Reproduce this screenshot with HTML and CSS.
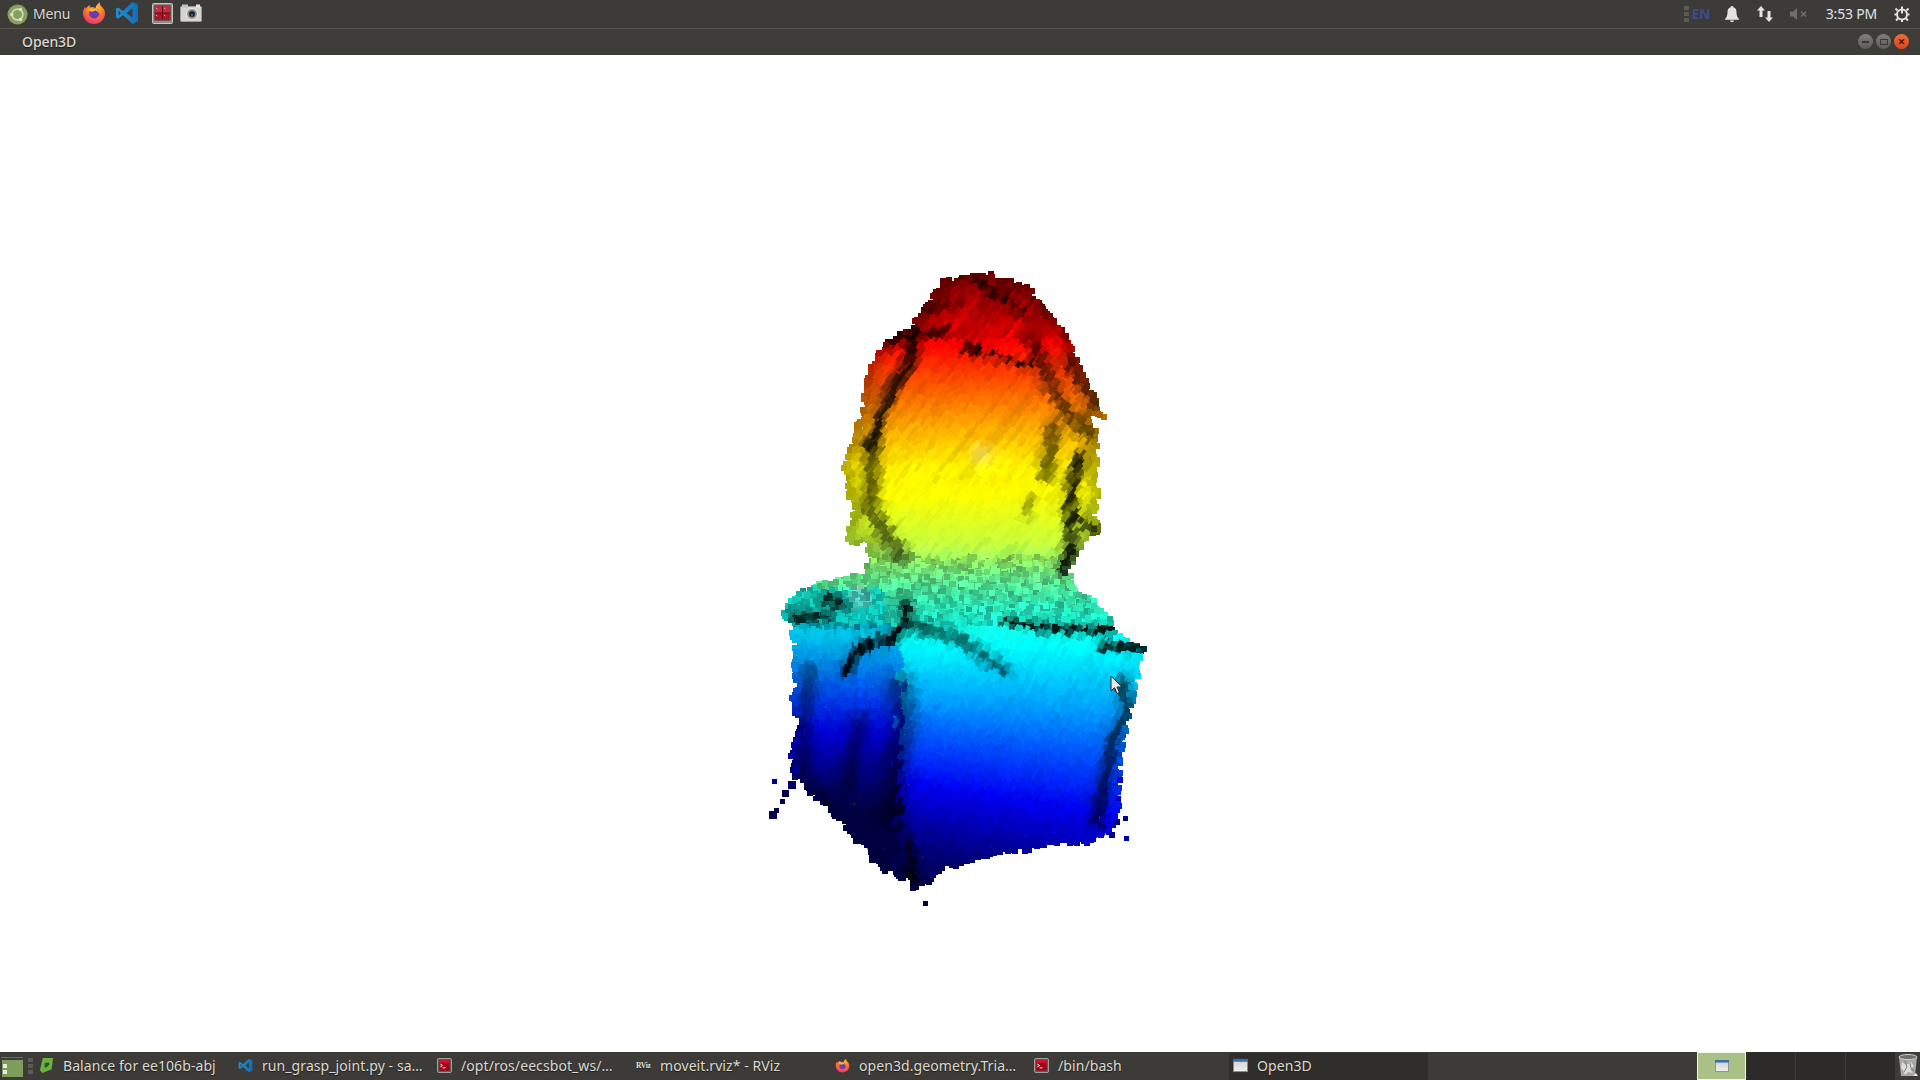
FILE: index.html
```
<!DOCTYPE html>
<html lang="en">
<head>
<meta charset="utf-8">
<title>Open3D</title>
<link rel="stylesheet" href="styles.css">
</head>
<body>
<svg class="defs" width="0" height="0" aria-hidden="true">
  <defs>
    <radialGradient id="ffBody" cx="0.55" cy="0.25" r="0.85">
      <stop offset="0" stop-color="#ffd23a"/><stop offset="0.45" stop-color="#ff7a2a"/><stop offset="1" stop-color="#e8237a"/>
    </radialGradient>
    <linearGradient id="vsBlue" x1="0" y1="0" x2="1" y2="0">
      <stop offset="0" stop-color="#1f8fd8"/><stop offset="1" stop-color="#0f6fb8"/>
    </linearGradient>
    <linearGradient id="winFace" x1="0" y1="0" x2="0" y2="1">
      <stop offset="0" stop-color="#cfd2cf"/><stop offset="1" stop-color="#f0f0ee"/>
    </linearGradient>
    <symbol id="i-firefox" viewBox="0 0 24 24">
      <path fill="url(#ffBody)" d="M12 23C5.800 23 1 18.300 1 12.200c0-2.400.7-4.600 2-6.300l1 1.900C5 5.600 6.800 4.500 8.500 4.300 7.800 5 7.400 5.800 7.500 6.500 9.500 5.900 12 6.200 13.500 7.300 13.800 4.800 15.800 2.300 18 1c-.4 1.800.2 3.200 1.500 4.500C21.800 7.600 23 9.800 23 12.500 23 18.300 18.200 23 12 23z"/>
      <circle cx="12.200" cy="12.400" r="5.200" fill="#6a3bb8"/>
      <path fill="#ffb52e" d="M6 9.500c2-2.400 6.500-3 9-1.200 1.600 1.200 2.500 3 2.200 5-.5-2-2-3.300-4-3.700-1.200.2-2 .6-2.600 1.200L6 9.500z"/>
    </symbol>
    <symbol id="i-vscode" viewBox="0 0 24 24">
      <path fill="url(#vsBlue)" d="M17.500 1 23 3.700v16.600L17.500 23 8 13.900 3.300 17.500 1 16.300V7.700l2.300-1.200L8 10.100 17.500 1zm0 6.200L11.600 12l5.900 4.800V7.200zM3.500 9.500v5L6 12 3.500 9.500z"/>
    </symbol>
    <symbol id="i-term" viewBox="0 0 16 16">
      <rect x="0.500" y="0.500" width="15" height="15" rx="1.500" fill="#5a5a56" stroke="#a8a8a3"/>
      <rect x="2.500" y="2.500" width="11" height="11" fill="#a50016"/>
      <rect x="2.500" y="2.500" width="11" height="2.500" fill="#e01030"/>
      <path d="M3.500 6.500 6 8 3.500 9.500M6 10.500h3" fill="none" stroke="#fff" stroke-width="1"/>
    </symbol>
    <symbol id="i-window" viewBox="0 0 16 14">
      <rect x="0.500" y="0.500" width="15" height="13" fill="url(#winFace)" stroke="#8a8a88"/>
      <rect x="0" y="0" width="16" height="3" fill="#3a6cb4"/>
    </symbol>
  </defs>
</svg>

<header class="panel">
  <div class="menu">
    <svg class="menu-logo" viewBox="0 0 24 24" width="21" height="21" aria-hidden="true">
      <circle cx="12" cy="12" r="11.500" fill="#87a05e"/>
      <circle cx="12" cy="12" r="6.200" fill="none" stroke="#cdd6b8" stroke-width="2"/>
      <circle cx="5.400" cy="12" r="1.900" fill="#dfe5d0"/>
      <circle cx="15.400" cy="6.300" r="1.900" fill="#dfe5d0"/>
      <circle cx="15.400" cy="17.700" r="1.900" fill="#dfe5d0"/>
    </svg>
    <span class="menu-label">Menu</span>
  </div>
  <div class="launchers">
    <svg class="launch launch-ff" aria-hidden="true"><use href="#i-firefox"/></svg>
    <svg class="launch launch-vs" aria-hidden="true"><use href="#i-vscode"/></svg>
    <svg class="launch launch-term" viewBox="0 0 21 21" aria-hidden="true">
      <rect x="0.500" y="0.500" width="20" height="20" rx="1" fill="#8c8c88" stroke="#c4c4c0"/>
      <rect x="2.500" y="2.500" width="16" height="15" fill="#5f1018"/>
      <rect x="3" y="3" width="7" height="6.500" fill="#c8283c"/>
      <rect x="11" y="3" width="7" height="6.500" fill="#c8283c"/>
      <rect x="3" y="10.500" width="7" height="6.500" fill="#a51828"/>
      <rect x="11" y="10.500" width="7" height="6.500" fill="#a51828"/>
      <path d="M4 5l1.500 1M12 5l1.500 1M4 12l1.500 1M12 12l1.500 1" stroke="#f2c8cc" stroke-width="0.800"/>
    </svg>
    <svg class="launch launch-cam" viewBox="0 0 22 18" aria-hidden="true">
      <rect x="0.500" y="2.500" width="21" height="15" rx="1" fill="#d4d4d0" stroke="#9a9a96"/>
      <rect x="2" y="0.500" width="6" height="3" fill="#c0c0bc"/>
      <rect x="16" y="0.500" width="4" height="3" fill="#e6e6e2"/>
      <circle cx="12" cy="10" r="5.500" fill="#8f8f8b" stroke="#f0f0ec"/>
      <circle cx="12" cy="10" r="3" fill="#20242e"/>
      <circle cx="12" cy="11" r="1.200" fill="#2f5fb0"/>
    </svg>
  </div>
  <div class="tray">
    <span class="grip"></span>
    <span class="lang">EN</span>
    <svg class="tray-icon tray-bell" viewBox="0 0 14 16" aria-hidden="true">
      <path fill="#e6e3dc" d="M7 0c1 0 1.400.6 1.400 1.300C10.600 2 11.500 3.800 11.500 6.500c0 3 .8 4.800 2.500 6.500v.8H0V13c1.700-1.700 2.500-3.500 2.500-6.500 0-2.700.9-4.500 3.100-5.200C5.600.6 6 0 7 0zM5 14.500h4C9 15.500 8 16 7 16s-2-.5-2-1.500z"/>
    </svg>
    <svg class="tray-icon tray-net" viewBox="0 0 16 16" aria-hidden="true">
      <path fill="#e6e3dc" d="M4 0 8 4.500H5.500V11h-3V4.500H0zM12 16 8 11.500h2.500V5h3v6.500H16z"/>
    </svg>
    <svg class="tray-icon tray-mute" viewBox="0 0 18 12" aria-hidden="true">
      <path fill="#6f6e69" d="M0 3.500h3.500L7 0v12L3.500 8.500H0z"/>
      <path d="M11 3.500l5 5M16 3.500l-5 5" stroke="#6f6e69" stroke-width="1.600" fill="none"/>
    </svg>
    <span class="clock">3:53 PM</span>
    <svg class="tray-icon tray-gear" viewBox="0 0 16 16" aria-hidden="true">
      <circle cx="8" cy="8.500" r="5" fill="none" stroke="#e6e3dc" stroke-width="2"/>
      <path d="M8 0.500v7M1.500 2.500l2 2M14.500 2.500l-2 2M0.500 8.500h2M13.500 8.500h2M2 14.500l2-2M14 14.500l-2-2M8 14v2" stroke="#e6e3dc" stroke-width="2" fill="none"/>
    </svg>
  </div>
</header>

<div class="titlebar">
  <span class="title">Open3D</span>
  <div class="win-buttons">
    <span class="wb wb-min"><i class="glyph-min"></i></span>
    <span class="wb wb-max"><i class="glyph-max"></i></span>
    <span class="wb wb-close">×</span>
  </div>
</div>

<main class="viewport">
  <canvas id="cloud" width="1920" height="997"></canvas>
  <svg class="cursor" viewBox="0 0 13 20" width="13" height="20" aria-hidden="true">
    <path d="M1 1v15l3.500-3.300L7 18.500l2.500-1-2.500-5.500h5z" fill="#e8e8e8" stroke="#222" stroke-width="1"/>
  </svg>
</main>

<footer class="taskbar">
  <div class="show-desktop">
    <svg viewBox="0 0 22 20" width="22" height="20" aria-hidden="true">
      <rect x="0" y="0" width="22" height="1" fill="#6c6b66"/>
      <rect x="1" y="3" width="21" height="17" fill="#7e9c5b"/>
      <rect x="2" y="7" width="4" height="4" fill="#e8eadf"/>
      <rect x="2" y="13" width="4" height="4" fill="#e8eadf"/>
    </svg>
  </div>
  <span class="grip grip-task"></span>
  <div class="tasks">
    <div class="task">
      <svg class="task-icon" viewBox="0 0 14 16" aria-hidden="true"><path fill="#6fb13f" d="M3 0h11l-1.500 12-10 4L0 13z"/><path fill="#1f5a2c" d="M5 5h5v2L7 10H5z"/></svg>
      <span class="task-label">Balance for ee106b-abj</span>
    </div>
    <div class="task">
      <svg class="task-icon" aria-hidden="true"><use href="#i-vscode"/></svg>
      <span class="task-label">run_grasp_joint.py - sa…</span>
    </div>
    <div class="task">
      <svg class="task-icon" aria-hidden="true"><use href="#i-term"/></svg>
      <span class="task-label">/opt/ros/eecsbot_ws/…</span>
    </div>
    <div class="task">
      <span class="rviz-logo">RViz</span>
      <span class="task-label">moveit.rviz* - RViz</span>
    </div>
    <div class="task">
      <svg class="task-icon" aria-hidden="true"><use href="#i-firefox"/></svg>
      <span class="task-label">open3d.geometry.Tria…</span>
    </div>
    <div class="task">
      <svg class="task-icon" aria-hidden="true"><use href="#i-term"/></svg>
      <span class="task-label">/bin/bash</span>
    </div>
    <div class="task task-active">
      <svg class="task-icon" aria-hidden="true"><use href="#i-window"/></svg>
      <span class="task-label">Open3D</span>
    </div>
  </div>
  <div class="workspaces">
    <div class="ws ws-current"><svg class="ws-win" aria-hidden="true"><use href="#i-window"/></svg></div>
    <div class="ws"></div>
    <div class="ws"></div>
    <div class="ws"></div>
  </div>
  <div class="trash">
    <svg viewBox="0 0 20 24" width="20" height="24" aria-hidden="true">
      <path d="M1 3h18l-2 19H3z" fill="#a8a8a4"/>
      <ellipse cx="10" cy="3" rx="9" ry="2.500" fill="#6f6f6b" stroke="#cfcfca"/>
      <path d="M4 8l4 3 5-3 3 4-4 3 3 4-5-1-3 3-2-5-2-2z" fill="#dcdcd8"/>
      <path d="M7 7l2 6-3 5M12 9l1 5 3 3" stroke="#7f7f7b" fill="none"/>
      <path d="M15 22l3-3 2 3z" fill="#eee"/>
    </svg>
  </div>
</footer>
<script src="script.js"></script>
</body>
</html>
```
FILE: styles.css
```
* { box-sizing: border-box; }
html, body { margin: 0; height: 100%; }
body {
  display: flex;
  flex-direction: column;
  height: 100vh;
  overflow: hidden;
  background: #fff;
  font-family: "Noto Sans", "Open Sans", sans-serif;
  font-size: 14px;
  color: #dcd9d2;
}
.defs { position: absolute; }

.panel {
  display: flex;
  align-items: center;
  height: 29px;
  flex: none;
  background: #3d3b37;
  border-bottom: 1px solid #55534e;
}
.menu { display: flex; align-items: center; gap: 5px; margin-left: 7px; }
.menu-logo { display: block; }
.menu-label { letter-spacing: -0.2px; text-shadow: 0 1px 1px #1d1c1a; padding-bottom: 1px; }
.launchers { display: flex; align-items: center; margin-left: 12px; padding-bottom: 2px; }
.launch { display: block; }
.launch-ff { width: 24px; height: 24px; }
.launch-vs { width: 24px; height: 24px; margin-left: 9px; }
.launch-term { width: 21px; height: 21px; margin-left: 13px; }
.launch-cam { width: 22px; height: 18px; margin-left: 7px; }
.tray { display: flex; align-items: center; margin-left: auto; padding-bottom: 1px; }
.grip {
  display: block;
  width: 5px;
  height: 16px;
  background: repeating-linear-gradient(#5c5a55 0 4px, transparent 4px 6px);
}
.lang { margin-left: 3px; color: #3b4c96; font-weight: 700; font-size: 13.500px; width: 24px; }
.tray-icon { display: block; }
.tray-bell { width: 14px; height: 16px; margin-left: 9px; }
.tray-net { width: 16px; height: 16px; margin-left: 18px; }
.tray-mute { width: 18px; height: 12px; margin-left: 17px; }
.clock { margin-left: 18px; letter-spacing: -0.2px; color: #dfe3ea; }
.tray-gear { width: 16px; height: 16px; margin-left: 17px; margin-right: 10px; }

.titlebar {
  display: flex;
  align-items: center;
  height: 26px;
  flex: none;
  padding-left: 22px;
  padding-right: 11px;
  padding-bottom: 1px;
  background: #3d3c38;
}
.title { font-weight: 500; color: #dcd9d2; text-shadow: 0 1px 1px #1d1c1a; letter-spacing: -0.1px; }
.win-buttons { display: flex; gap: 3px; margin-left: auto; }
.wb {
  display: flex;
  align-items: center;
  justify-content: center;
  width: 15px;
  height: 15px;
  border-radius: 50%;
  background: linear-gradient(#7f7e79, #5d5c58);
}
.glyph-min { display: block; width: 7px; height: 2px; background: #3a3936; }
.glyph-max { display: block; width: 8px; height: 6px; border: 1px solid #3a3936; }
.wb-close {
  background: linear-gradient(#f0693a, #d9481c);
  color: #4a1c0c;
  font-size: 13px;
  line-height: 15px;
  font-weight: 700;
}

.viewport { position: relative; flex: 1; min-height: 0; background: #fff; }
#cloud { display: block; }
.cursor { position: absolute; left: 1110px; top: 620px; }

.taskbar {
  display: flex;
  align-items: stretch;
  height: 28px;
  flex: none;
  background: #3c3b37;
}
.show-desktop { display: flex; align-items: center; width: 24px; padding-left: 1px; padding-top: 2px; }
.grip-task { align-self: center; margin-left: 4px; height: 16px; }
.tasks { display: flex; margin-left: 2px; }
.task {
  display: flex;
  align-items: center;
  gap: 9px;
  width: 199px;
  padding-left: 4px;
  padding-bottom: 2px;
  white-space: nowrap;
  overflow: hidden;
  text-shadow: 0 1px 1px #1d1c1a;
}
.task-active { background: #2f2e2b; margin-top: 1px; padding-bottom: 3px; padding-left: 4px; }
.task-icon { display: block; width: 15px; height: 15px; flex: none; }
.task-label { letter-spacing: 0.08px; }
.rviz-logo { width: 15px; font-family: "Liberation Serif", serif; font-size: 7.500px; color: #e6e3dc; flex: none; letter-spacing: -0.3px; font-weight: 700; }
.workspaces { display: flex; margin-left: auto; margin-right: 0; }
.ws { width: 50px; background: #2c2b29; border-right: 1px solid #3c3b37; }
.ws-current {
  display: flex;
  align-items: center;
  justify-content: center;
  width: 49px;
  background: #a9c087;
  border: 1px solid #f3f4ee;
  border-bottom-width: 1px;
}
.ws-win { display: block; width: 14px; height: 12px; }
.trash { display: flex; align-items: center; justify-content: center; width: 24px; background: #3c3b37; }
```
FILE: script.js
```
(function () {
  var canvas = document.getElementById('cloud');
  var ctx = canvas.getContext('2d');
  var TOP = 55;

  function h(p) { return p.map(function (q) { return [760 + q[0] / 3, 260 + q[1] / 3]; }); }
  function b(p) { return p.map(function (q) { return [760 + q[0] / 3, 580 + q[1] / 3]; }); }

  var outline = h([[625,45],[720,50],[800,80],[860,150],[910,210],[960,320],[1010,430],[1025,470],[990,470],[1015,560],[1000,640],[1018,700],[1000,760],[1020,810],[970,850],[960,880],[925,940]])
    .concat(b([[940,20],[990,60],[1040,100],[1060,150],[1100,185],[1160,205],[1140,230],[1130,310],[1100,450],[1075,560],[1085,600],[1070,650],[1075,700],[1050,770],[1000,785],[880,790],[700,825],[560,860],[520,890],[470,925],[440,895],[400,885],[370,870],[310,810],[250,730],[190,670],[130,620],[90,570],[100,500],[120,430],[95,370],[105,270],[100,200],[100,130],[75,100],[95,55],[160,10]]))
    .concat(h([[200,965],[320,940],[335,900],[320,850],[260,845],[275,800],[280,750],[265,680],[250,610],[270,580],[280,520],[300,470],[320,400],[325,330],[350,280],[380,250],[460,190],[520,110],[555,65]]));
  var closed = outline.concat([outline[0]]);

  // [polyline, width, darkness]
  var creases = [
    [h([[460,240],[450,310],[400,380],[360,470],[335,550]]), 7, 0.85],
    [h([[335,550],[335,640],[330,740],[380,830],[420,890]]), 9, 0.6],
    [h([[620,265],[700,285],[820,320]]), 4, 0.85],
    [h([[380,250],[460,220],[550,220]]), 6, 0.7],
    [h([[480,150],[600,130]]), 5, 0.45],
    [h([[650,70],[720,105],[790,160]]), 5, 0.65],
    [h([[820,250],[880,390],[920,450],[980,520]]), 8, 0.6],
    [h([[880,500],[860,640]]), 9, 0.55],
    [h([[960,590],[935,690],[930,780],[930,880],[910,930]]), 7, 0.85],
    [h([[1000,810],[950,770]]), 5, 0.7],
    [h([[810,720],[800,760]]), 5, 0.35],
    [h([[1010,440],[970,380],[930,300]]), 7, 0.55],
    [b([[440,70],[440,130],[400,170],[290,210],[260,270]]), 6, 0.92],
    [b([[110,110],[200,110]]), 6, 0.8],
    [b([[200,50],[240,75]]), 7, 0.75],
    [b([[740,125],[900,150],[1050,150]]), 4.500, 0.9],
    [b([[1030,195],[1150,205]]), 5, 0.88],
    [b([[470,140],[600,180],[730,270]]), 7, 0.55],
    [b([[420,320],[430,420],[410,530],[400,700]]), 14, 0.45],
    [b([[300,430],[260,620]]), 11, 0.4],
    [b([[1090,310],[1100,400],[1060,480],[1040,580],[1010,720]]), 8, 0.6],
    [b([[150,280],[130,420],[130,600],[190,660]]), 10, 0.4],
    [b([[440,770],[460,900]]), 6, 0.75]
  ];

  var stops = [
    [270, 150, 0, 0], [300, 190, 0, 0], [343, 255, 0, 0], [377, 255, 70, 0], [427, 255, 170, 0],
    [467, 255, 240, 0], [495, 255, 255, 0], [543, 200, 255, 60], [577, 110, 255, 150], [605, 50, 255, 200],
    [645, 0, 255, 255], [697, 0, 170, 255], [747, 0, 80, 255], [797, 0, 0, 240], [847, 0, 0, 150], [900, 0, 0, 70]
  ];

  function jet(y) {
    if (y <= stops[0][0]) return stops[0].slice(1);
    for (var i = 1; i < stops.length; i++) {
      if (y <= stops[i][0]) {
        var a = stops[i - 1], c = stops[i], t = (y - a[0]) / (c[0] - a[0]);
        return [a[1] + (c[1] - a[1]) * t, a[2] + (c[2] - a[2]) * t, a[3] + (c[3] - a[3]) * t];
      }
    }
    return stops[stops.length - 1].slice(1);
  }

  function inside(x, y) {
    var c = false;
    for (var i = 0, j = outline.length - 1; i < outline.length; j = i++) {
      var a = outline[i], d = outline[j];
      if ((a[1] > y) !== (d[1] > y) && x < (d[0] - a[0]) * (y - a[1]) / (d[1] - a[1]) + a[0]) c = !c;
    }
    return c;
  }

  function distTo(line, x, y) {
    var best = 1e9;
    for (var i = 1; i < line.length; i++) {
      var a = line[i - 1], d = line[i], dx = d[0] - a[0], dy = d[1] - a[1];
      var t = ((x - a[0]) * dx + (y - a[1]) * dy) / (dx * dx + dy * dy);
      t = Math.max(0, Math.min(1, t));
      var ex = x - a[0] - t * dx, ey = y - a[1] - t * dy, e = Math.sqrt(ex * ex + ey * ey);
      if (e < best) best = e;
    }
    return best;
  }

  var seed = 12345;
  function rnd() { seed = (seed * 1664525 + 1013904223) >>> 0; return seed / 4294967296; }
  function hash(n) { var s = Math.sin(n * 127.1 + 3.7) * 43758.5453; return s - Math.floor(s); }
  function wob(x, y) { return Math.sin(x * 0.31 + y * 0.17) + Math.sin(x * 0.13 - y * 0.41 + 1.3); }

  var pts = [];
  for (var gy = 270; gy < 905; gy += 3.6) {
    for (var gx = 770; gx < 1160; gx += 3.6) {
      var x = gx + (rnd() - 0.5) * 2.6, y = gy + (rnd() - 0.5) * 2.6;
      if (inside(x + wob(x, y) * 1.4, y + wob(y, x) * 1.4)) pts.push([x, y, rnd()]);
    }
  }
  pts.sort(function (p, q) { return p[2] - q[2]; });

  pts.forEach(function (p) {
    var x = p[0], y = p[1], yeff = y, shade = 1;
    var edgeX = 900 + wob(y, x) * 4;
    if (y > 625) {
      if (x < edgeX) { yeff = y + 35 + (y - 630) * 0.3; shade *= 0.92; }
      else { yeff = y + (1000 - x) * 0.15 * Math.max(0, (y - 640) / 150); }
    }
    if (y > 588 && y <= 625 && x < 885) yeff = Math.max(yeff, 628 + (y - 600) * 0.4);
    creases.forEach(function (cr) {
      var e = (distTo(cr[0], x, y) + wob(x * 1.4, y * 1.4) * 1.2 + rnd() * 2 - 1) / cr[1];
      if (e < 0) e = 0;
      if (e < 2.5) shade *= 1 - cr[2] * Math.exp(-e * e);
    });
    var edge = distTo(closed, x, y);
    var head = y < 560;
    if (head) shade *= 1 - 0.3 * Math.exp(-edge * edge / 110);
    if (y < 340) shade *= 0.72 + 0.3 * hash(Math.floor((x * 1.2 + y) / 6));
    var phase, angle, len;
    if (head) { phase = (x * 1.25 + y) / 5; angle = -0.92; len = 10; }
    else if (x < edgeX) { phase = x / 6; angle = -1.5; len = 10; }
    else { phase = (x * 1.8 + y) / 6; angle = -1.1; len = 9; }
    var band = hash(Math.floor(phase));
    var amp = head ? 0.14 : 0.07;
    if (y > 480 && y < 540 && Math.abs(x - 975) < 70) amp = 0.02;
    shade *= 1 - amp / 2 + amp * band;
    shade *= 0.97 + rnd() * 0.05;
    if (y > 555 && y < 628) { shade *= 0.68 + rnd() * 0.38; len = 5; }
    if (y > 590 && y < 630 && x < 905) shade *= 0.85;
    var rgb = jet(yeff), white = 0;
    var dh = Math.hypot(x - 982, y - 455);
    if (dh < 18) white = 0.32 * (1 - dh / 18);
    if (Math.hypot(x - 860, y - 597) < 12) white = 0.3;
    var px = rgb.map(function (v) {
      return Math.max(0, Math.min(255, Math.round((v + (255 - v) * white) * shade)));
    });
    ctx.fillStyle = 'rgb(' + px.join(',') + ')';
    var top = Math.round(y) - TOP;
    if (edge < 7 || len < 6) {
      ctx.fillRect(Math.round(x - 3), top - 3, 6, 6);
    } else {
      ctx.save();
      ctx.translate(x, top);
      ctx.rotate(angle);
      ctx.fillRect(-len / 2, -2.5, len, 5);
      ctx.restore();
    }
  });

  // [z8 x, z8 y, size, colour]
  var strays = [
    [42,605,5,'#000090'],[95,615,8,'#000060'],[75,640,7,'#000048'],[68,665,5,'#000050'],[50,690,5,'#000050'],
    [38,705,8,'#000048'],[495,970,5,'#000040'],[1100,775,5,'#0000b0'],[1095,715,5,'#000090'],[1075,655,5,'#0000c0'],
    [1080,600,6,'#0000d0'],[1070,725,6,'#000080'],[1055,765,6,'#000080'],[1030,740,5,'#000070'],[520,885,6,'#000080'],
    [460,925,6,'#000040'],[165,655,5,'#000060'],[110,570,6,'#000090'],[115,490,6,'#0000a0']
  ];
  strays.forEach(function (s) {
    var x = 760 + s[0] / 3, y = 580 + s[1] / 3;
    ctx.fillStyle = s[3];
    ctx.fillRect(Math.round(x - s[2] / 2), Math.round(y - s[2] / 2) - TOP, s[2], s[2]);
  });
})();
```
